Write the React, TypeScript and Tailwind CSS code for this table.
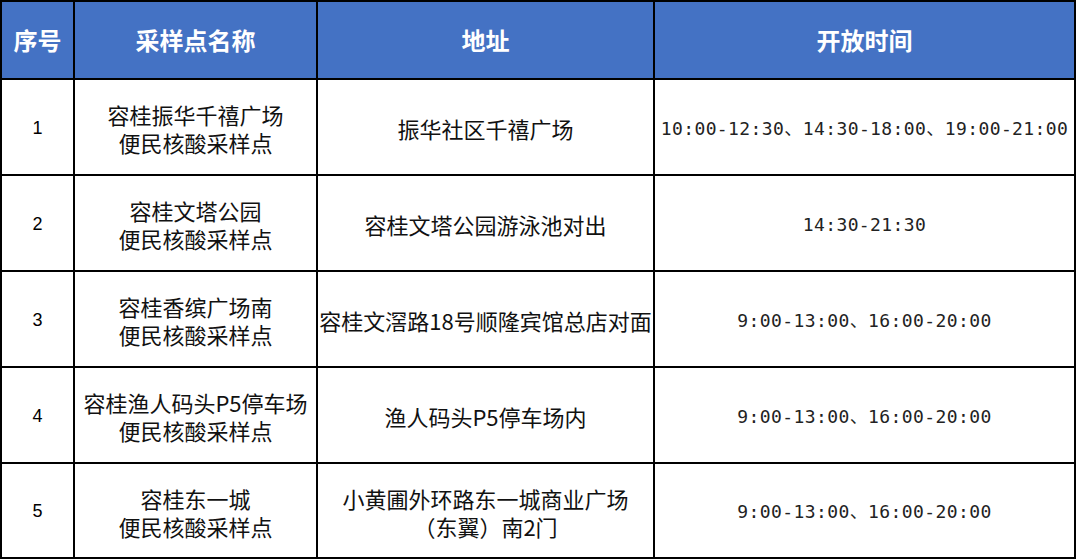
const rows = [
  { no: "1", name: ["容桂振华千禧广场", "便民核酸采样点"], addr: ["振华社区千禧广场"], time: "10:00-12:30、14:30-18:00、19:00-21:00" },
  { no: "2", name: ["容桂文塔公园", "便民核酸采样点"], addr: ["容桂文塔公园游泳池对出"], time: "14:30-21:30" },
  { no: "3", name: ["容桂香缤广场南", "便民核酸采样点"], addr: ["容桂文滘路18号顺隆宾馆总店对面"], time: "9:00-13:00、16:00-20:00" },
  { no: "4", name: ["容桂渔人码头P5停车场", "便民核酸采样点"], addr: ["渔人码头P5停车场内"], time: "9:00-13:00、16:00-20:00" },
  { no: "5", name: ["容桂东一城", "便民核酸采样点"], addr: ["小黄圃外环路东一城商业广场", "（东翼）南2门"], time: "9:00-13:00、16:00-20:00" },
];

const cjk = "font-['Noto_Sans_CJK_SC',sans-serif]";

// multi-line cell text, kept as one text block
function Lines({ lines }: { lines: string[] }) {
  return (
    <p className="whitespace-nowrap text-center">
      {lines.map((l, i) => (
        <span key={l}>
          {i > 0 && <br />}
          {l}
        </span>
      ))}
    </p>
  );
}

export default function App() {
  return (
    <div className="w-[1076px] h-[560px] bg-white">
      <div className="grid grid-cols-[71px_241px_335px_419px] grid-rows-[76px_repeat(4,94px)_93px] gap-[2px] p-[2px] bg-black w-[1076px]">
        {["序号", "采样点名称", "地址", "开放时间"].map((h) => (
          <div
            key={h}
            className={`bg-[#4472c4] text-white font-bold text-[24px] flex items-center justify-center pb-[1px] ${cjk}`}
          >
            {h}
          </div>
        ))}
        {rows.map((r) => (
          <Row key={r.no} r={r} />
        ))}
      </div>
    </div>
  );
}

function Row({ r }: { r: (typeof rows)[number] }) {
  return (
    <>
      <div className="bg-white flex items-center justify-center text-[18px] text-black font-['Liberation_Sans',sans-serif] pt-[2px]">
        {r.no}
      </div>
      <div className={`bg-white flex items-center justify-center text-[22px] leading-[28px] text-[#111] pt-[2px] ${cjk}`}>
        <Lines lines={r.name} />
      </div>
      <div className={`bg-white flex items-center justify-center text-[22px] leading-[28px] text-[#111] pt-[2px] ${cjk}`}>
        <Lines lines={r.addr} />
      </div>
      <div className="bg-white flex items-center justify-center text-[18px] tracking-[0.4px] text-[#222] whitespace-nowrap pt-[2px] font-['DejaVu_Sans_Mono','Noto_Sans_CJK_SC',monospace]">
        {r.time}
      </div>
    </>
  );
}
